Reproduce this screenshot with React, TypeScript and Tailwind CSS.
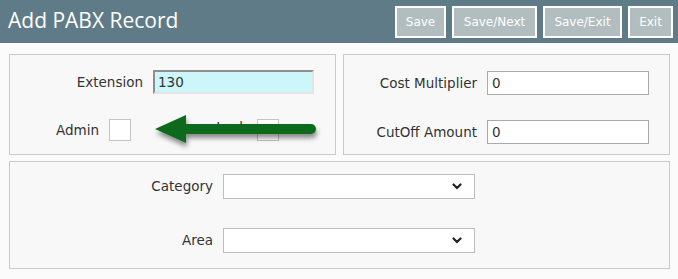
import { ReactNode } from "react"

const labelFont = { fontFamily: '"DejaVu Sans", Verdana, sans-serif' }

const Chevron = () => (
  <svg width="10" height="7" viewBox="0 0 10 7" className="shrink-0">
    <polyline points="1.5,1.5 5,5 8.5,1.5" fill="none" stroke="#222" strokeWidth="2.2" strokeLinecap="round" />
  </svg>
)

const Field = ({ label, labelW, children }: { label: string, labelW: string, children: ReactNode }) => (
  <div className="flex items-center">
    <span className={`${labelW} text-right text-[13.5px] text-[#333] shrink-0`}>{label}</span>
    <div className="ml-[10px]">{children}</div>
  </div>
)

const HeaderButton = ({ text, w }: { text: string, w: string }) => (
  <button className={`${w} h-[32px] border-2 border-white bg-[#b1bdbf] text-white text-[12px]`}>{text}</button>
)

const Select = () => (
  <div className="w-[252px] h-[25px] bg-white border border-[#bdbdbd] flex items-center justify-end pr-[12px]">
    <Chevron />
  </div>
)

const App = () => {
  return (
    <div className="w-[678px] h-[279px] bg-[#fbfbfb] overflow-hidden" style={labelFont}>
      {/* HEADER */}
      <div className="h-[43px] bg-[#5f7b88] flex items-center justify-between pl-[8px] pr-[5px]">
        <h1 className="text-white text-[21px] leading-none pb-[2px]" style={{ fontFamily: '"Open Sans", sans-serif' }}>Add PABX Record</h1>
        <div className="flex gap-[6px]">
          <HeaderButton text="Save" w="w-[51px]" />
          <HeaderButton text="Save/Next" w="w-[85px]" />
          <HeaderButton text="Save/Exit" w="w-[79px]" />
          <HeaderButton text="Exit" w="w-[45px]" />
        </div>
      </div>

      <div className="relative pt-[11px] pl-[9px] pr-[8px]">
        <div className="grid grid-cols-2 gap-[7px]">
          {/* LEFT PANEL */}
          <div className="border border-[#cacaca] bg-[#f8f8f8] pt-[15px] pb-[12px] flex flex-col gap-[24px]">
            <Field label="Extension" labelW="w-[133px]">
              <input
                readOnly
                value="130"
                className="w-[161px] h-[24px] bg-[#cdf6fb] border-2 border-t-[#8e8e8e] border-l-[#8e8e8e] border-r-[#e4e4e4] border-b-[#e4e4e4] pl-[3px] text-[13.5px] text-[#333] outline-none"
              />
            </Field>
            <div className="flex items-center h-[24px]">
              <span className="w-[89px] text-right text-[13.5px] text-[#333]">Admin</span>
              <span className="ml-[10px] w-[22px] h-[22px] bg-white border border-[#c4c4c4]"></span>
              <span className="w-[116px] text-right text-[13.5px] leading-none text-[#333] mb-[4px]">Lock</span>
              <span className="ml-[10px] w-[22px] h-[22px] bg-white border border-[#c4c4c4]"></span>
            </div>
          </div>

          {/* RIGHT PANEL */}
          <div className="border border-[#cacaca] bg-[#f8f8f8] pt-[16px] flex flex-col gap-[25px]">
            <Field label="Cost Multiplier" labelW="w-[133px]">
              <input readOnly value="0" className="w-[162px] h-[24px] bg-white border border-[#aaaaaa] pl-[4px] text-[13.5px] text-[#333] outline-none" />
            </Field>
            <Field label="CutOff Amount" labelW="w-[133px]">
              <input readOnly value="0" className="w-[162px] h-[24px] bg-white border border-[#aaaaaa] pl-[4px] text-[13.5px] text-[#333] outline-none" />
            </Field>
          </div>
        </div>

        {/* BOTTOM PANEL */}
        <div className="mt-[6px] border border-[#cacaca] bg-[#f8f8f8] pt-[12px] pb-[15px] flex flex-col gap-[29px]">
          <Field label="Category" labelW="w-[203px]">
            <Select />
          </Field>
          <Field label="Area" labelW="w-[203px]">
            <Select />
          </Field>
        </div>

        {/* ARROW */}
        <svg className="absolute left-[148px] top-[65px]" width="180" height="48" viewBox="0 0 180 48">
          <defs>
            <filter id="arrowShadow" x="-10%" y="-30%" width="120%" height="180%">
              <feDropShadow dx="1" dy="4" stdDeviation="2.5" floodColor="#000" floodOpacity="0.45" />
            </filter>
          </defs>
          <g filter="url(#arrowShadow)">
            <path d="M7 21 L38 7 L38 16 L163 16 A5 5 0 0 1 163 26 L38 26 L38 35 Z" fill="#0e6b1c" />
          </g>
        </svg>
      </div>
    </div>
  )
}

export default App
